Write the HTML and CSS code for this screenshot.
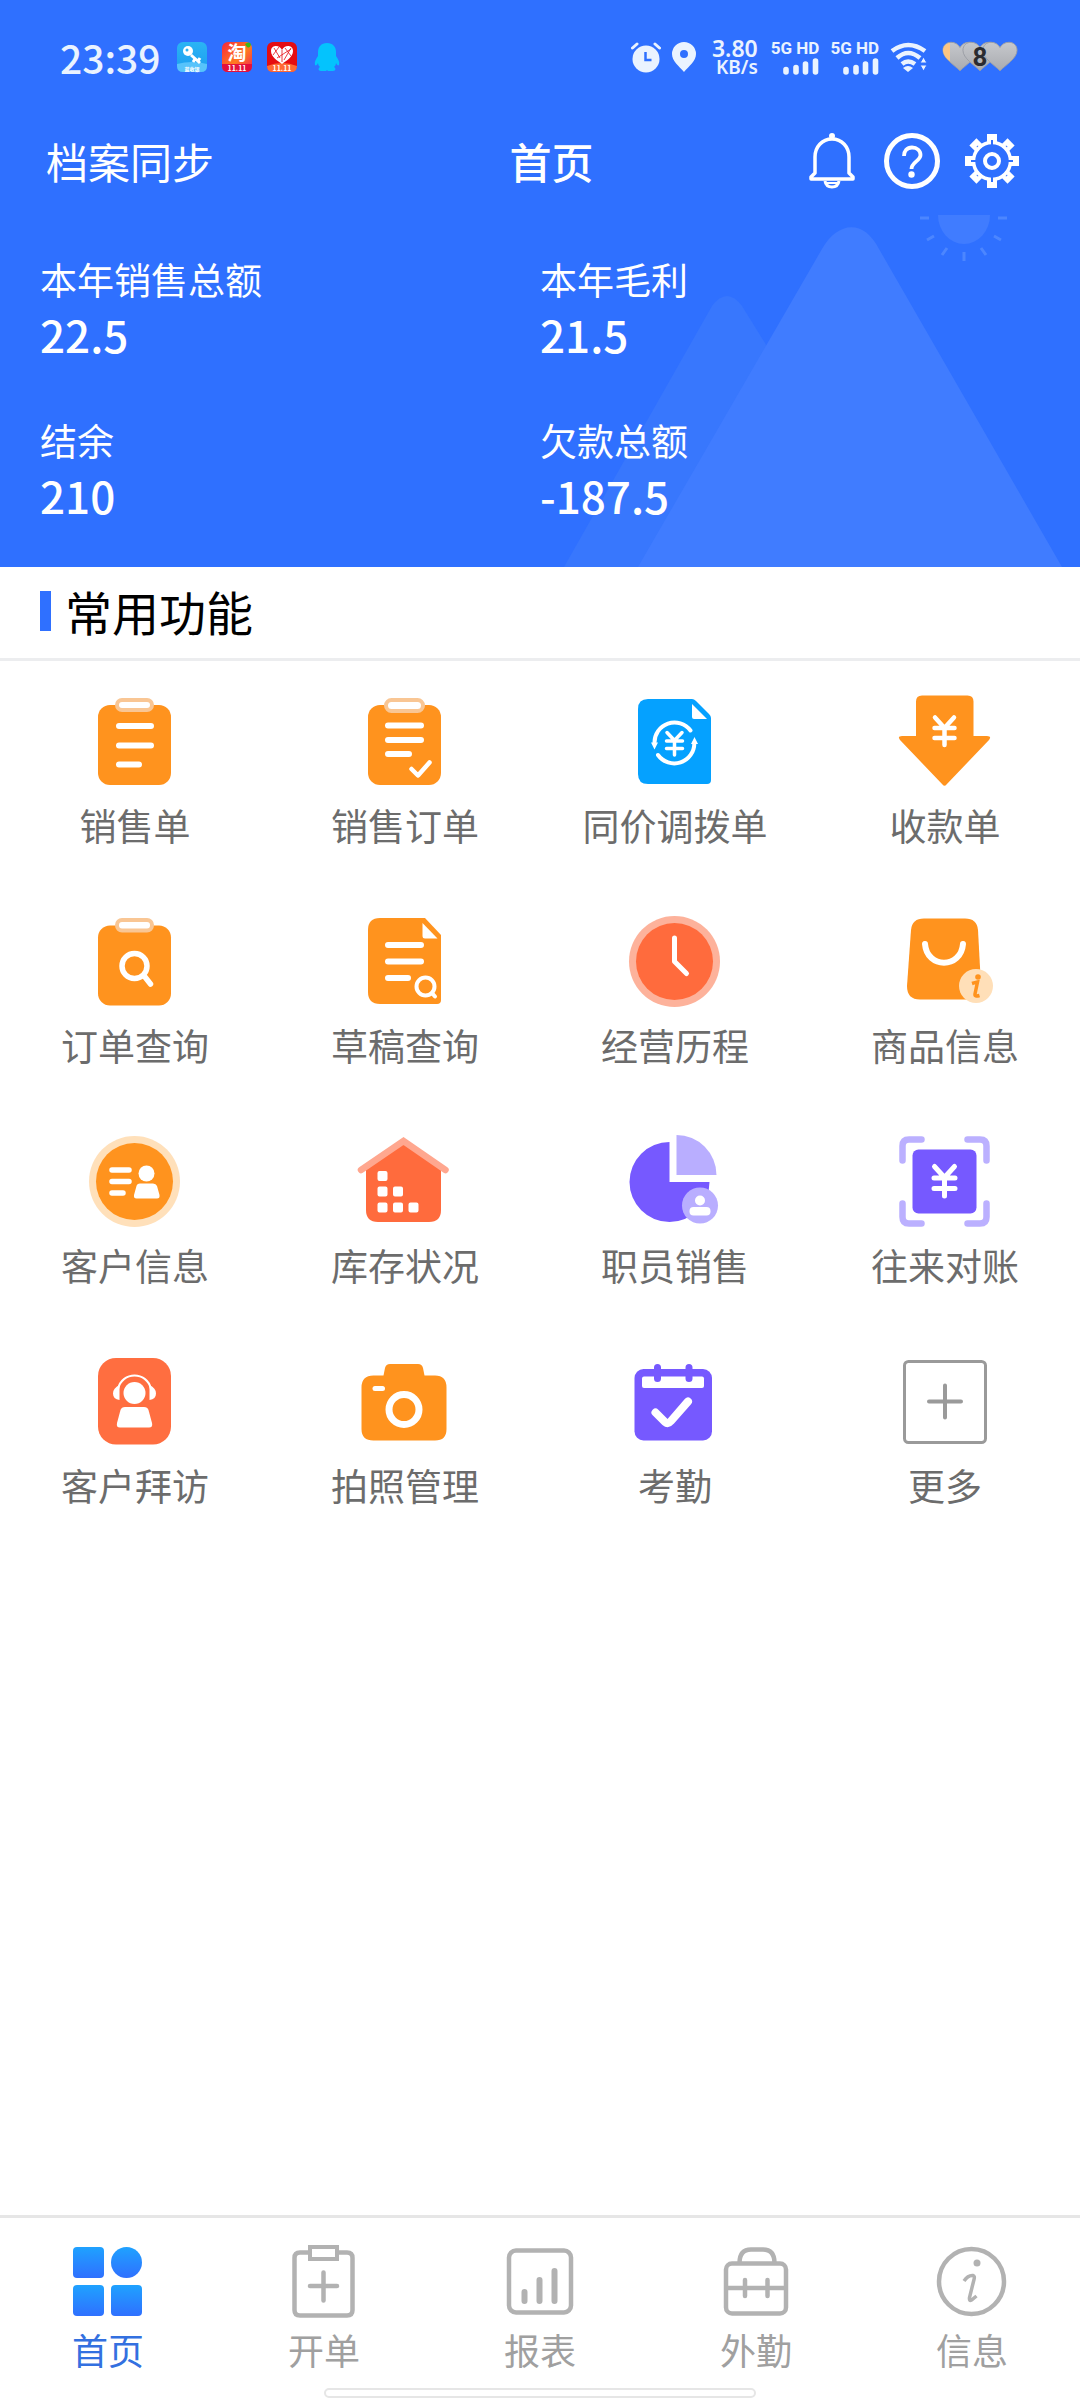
FILE: index.html
```html
<!DOCTYPE html>
<html lang="zh-CN">
<head>
<meta charset="utf-8">
<meta name="viewport" content="width=device-width, initial-scale=1">
<title>首页</title>
<link rel="stylesheet" href="styles.css">
</head>
<body>
<svg class="defs" aria-hidden="true">
  <defs>
    <linearGradient id="tabBlue" x1="0" y1="0" x2="0" y2="1"><stop offset="0" stop-color="#1fa2ff"/><stop offset="1" stop-color="#2f70ff"/></linearGradient>
    <linearGradient id="keyBlue" x1="0" y1="0" x2="0" y2="1"><stop offset="0" stop-color="#2bb4f4"/><stop offset="1" stop-color="#1b9df0"/></linearGradient>
    <linearGradient id="taoRed" x1="0" y1="0" x2="1" y2="1"><stop offset="0" stop-color="#f5263c"/><stop offset=".55" stop-color="#ff7a1f"/><stop offset="1" stop-color="#f01f5a"/></linearGradient>
    <linearGradient id="heartGrey" x1="0" y1="0" x2="0" y2="1"><stop offset="0" stop-color="#c6c8cc"/><stop offset="1" stop-color="#a9abb0"/></linearGradient>
    <symbol id="signal" viewBox="0 0 36 17"><path d="M3 11.500v2.500M13 9.500v4.500M22.500 6v8M32.500 3v11" stroke="#eaf3ff" stroke-width="5.600" stroke-linecap="round"/></symbol>
    <symbol id="heart" viewBox="0 0 38 32"><path d="M19 31C13 25 1 18 1 9.500 1 4 5 1 9.500 1 13.500 1 17 3 19 6.500 21 3 24.500 1 28.500 1 33 1 37 4 37 9.500 37 18 25 25 19 31Z"/></symbol>
    <g id="tooth"><path d="M25 3h10v10H25Z" fill="#fff"/><path d="M30 9v5" stroke="#2f70ff" stroke-width="2"/></g>
  </defs>
</svg>

<div class="app">
  <header class="hero">
    <svg class="hero-art" viewBox="0 0 516 352" aria-hidden="true">
      <path d="M0 352 148 91Q163 71 178 91L201 128 327 352Z" fill="#3877fd"/>
      <path d="M74 352 258 34C274 6 300 4 315 34L498 352Z" fill="#407cff"/>
      <path d="M374 0h52a26 29 0 0 1-52 0Z" fill="#407cff"/>
      <path d="M356 3h9M434 3h9M400 37v9M363 25l7-4M378 40l5-7M437 25l-7-4M422 40l-5-7" stroke="#4c86ff" stroke-width="3" fill="none"/>
    </svg>

    <div class="status">
      <time class="clock">23:39</time>
      <div class="notices">
        <svg width="30" height="30" viewBox="0 0 30 30" aria-hidden="true">
          <rect width="30" height="30" rx="6" fill="url(#keyBlue)"/>
          <path d="M0 22Q15 18 30 22V24Q30 30 24 30H6Q0 30 0 24Z" fill="#57c3fb"/>
          <path d="M14 13l9 8M18 17l-2 3M21 19l2-3" stroke="#fff" stroke-width="3"/>
          <circle cx="11" cy="9" r="5" fill="#fff"/><circle cx="10" cy="8" r="1.500" fill="#2bb4f4"/>
          <text x="15" y="29" font-size="5" font-weight="700" fill="#fff" text-anchor="middle">蓝收银</text>
        </svg>
        <svg width="30" height="30" viewBox="0 0 30 30" aria-hidden="true">
          <rect width="30" height="30" rx="6" fill="url(#taoRed)"/>
          <path d="M0 22h30v2q0 6-6 6H6q-6 0-6-6Z" fill="#e3103c"/>
          <path d="M23 2q4-3 6 0-1 5-4 3Z" fill="#3fb618"/>
          <text x="15" y="18" font-size="19" font-weight="700" fill="#fff" text-anchor="middle">淘</text>
          <text x="15" y="29" font-size="7" font-weight="700" fill="#fff" text-anchor="middle">11.11</text>
        </svg>
        <svg width="30" height="30" viewBox="0 0 30 30" aria-hidden="true">
          <rect width="30" height="30" rx="6" fill="#e50d12"/>
          <path d="M0 24Q15 18 30 24 30 30 24 30H6Q0 30 0 24Z" fill="#ff6a35"/>
          <path d="M15 22C11 19 4 15 4 9 4 5 7 4 9 4q4 0 6 4 2-4 6-4c2 0 5 1 5 5 0 6-7 10-11 13Z" fill="#fff"/>
          <path d="M7 6l6 10M12 5L6 13M24 6l-7 12M18 6l6 8M10 16l14-9M15 8v12" stroke="#e50d12" stroke-width=".8"/>
          <text x="15" y="29" font-size="7" font-weight="700" fill="#fff" text-anchor="middle">11.11</text>
        </svg>
        <svg width="30" height="30" viewBox="0 0 30 30" aria-hidden="true">
          <path d="M15 1c6 0 9 4 9 9v4c2 3 4 6 3 9-1 1-2 0-3-2 0 2-1 3-2 4 2 1 2 4-1 4h-5l-1-1-1 1H9c-3 0-3-3-1-4-1-1-2-2-2-4-1 2-2 3-3 2-1-3 1-6 3-9v-4c0-5 3-9 9-9Z" fill="#04c3fd"/>
        </svg>
      </div>
      <div class="system">
        <svg width="30" height="32" viewBox="0 0 30 32" aria-hidden="true">
          <circle cx="15" cy="18" r="13.500" fill="#eaf3ff"/>
          <path d="M1.500 7 6 3M28.500 7 24 3" stroke="#eaf3ff" stroke-width="3" stroke-linecap="round"/>
          <path d="M14.500 11v8h6" fill="none" stroke="#2f70ff" stroke-width="2.500"/>
        </svg>
        <svg width="24" height="30" viewBox="0 0 24 30" aria-hidden="true"><path fill-rule="evenodd" d="M12 0a12 12 0 0 1 12 12c0 7-7 12-12 18C7 24 0 19 0 12A12 12 0 0 1 12 0Zm0 8a4 4 0 1 0 0 8 4 4 0 0 0 0-8Z" fill="#eaf3ff"/></svg>
        <div class="speed"><span class="rate">3.80</span><span class="unit">KB/s</span></div>
        <div class="sim"><span>5G HD</span><svg width="36" height="17"><use href="#signal"/></svg></div>
        <div class="sim"><span>5G HD</span><svg width="36" height="17"><use href="#signal"/></svg></div>
        <svg width="38" height="30" viewBox="0 0 38 30" aria-hidden="true">
          <path d="M2 9Q18-3 35 9M7 16Q18 6 30 16M12 22Q18 17 25 22" fill="none" stroke="#eaf3ff" stroke-width="4.500"/>
          <path d="M13 26q5-4 10 0l-5 4Z" fill="#eaf3ff"/>
          <path d="M30 21l3.500-6 3.500 6ZM30 23h7l-3.500 6Z" fill="#eaf3ff" stroke="#2f70ff" stroke-width="1"/>
        </svg>
        <div class="battery">
          <svg width="76" height="32" viewBox="0 0 76 32" aria-hidden="true">
            <g fill="url(#heartGrey)" stroke="#9b9ea5" stroke-width="1">
              <use href="#heart" width="36" height="31"/>
              <use href="#heart" x="20" width="36" height="31"/>
              <use href="#heart" x="40" width="36" height="31"/>
            </g>
            <path d="M8 2C3 3 1 6 1 10q1 6 7 10Z" fill="#fdc583"/>
          </svg>
          <span class="level">8</span>
        </div>
      </div>
    </div>

    <div class="toolbar">
      <button class="sync" type="button">档案同步</button>
      <h1 class="title">首页</h1>
      <div class="actions">
        <button type="button" aria-label="通知">
          <svg width="60" height="60" viewBox="0 0 60 60" fill="none" stroke="#fff" stroke-width="3.500">
            <path d="M13 42V26C13 16 20 8 30 8s17 8 17 18v16l4 4v2H9v-2Z" stroke-linejoin="round"/>
            <path d="M23 50q1 6 7 6t7-6" stroke-width="3"/><path d="M25 52h10" stroke-width="2"/><circle cx="30" cy="5" r="2" fill="#fff" stroke-width="2"/>
          </svg>
        </button>
        <button type="button" aria-label="帮助">
          <svg width="60" height="60" viewBox="0 0 60 60" fill="none" stroke="#fff">
            <circle cx="30" cy="30" r="25.500" stroke-width="5"/>
            <path d="M22 25c0-5 3-8.500 8-8.500s8.500 3 8.500 7.500c0 6-9 7-9 14" stroke-width="3.800"/>
            <circle cx="29.500" cy="43.500" r="3.200" fill="#fff" stroke="none"/>
          </svg>
        </button>
        <button type="button" aria-label="设置">
          <svg width="60" height="60" viewBox="0 0 60 60" fill="none">
            <use href="#tooth"/>
            <use href="#tooth" transform="rotate(45 30 30)"/>
            <use href="#tooth" transform="rotate(90 30 30)"/>
            <use href="#tooth" transform="rotate(135 30 30)"/>
            <use href="#tooth" transform="rotate(180 30 30)"/>
            <use href="#tooth" transform="rotate(225 30 30)"/>
            <use href="#tooth" transform="rotate(270 30 30)"/>
            <use href="#tooth" transform="rotate(315 30 30)"/>
            <circle cx="30" cy="30" r="18.500" stroke="#fff" stroke-width="3.500"/>
            <path d="M30 9v5M30 46v5M9 30h5M46 30h5" stroke="#2f70ff" stroke-width="2"/>
            <circle cx="30" cy="30" r="7" stroke="#fff" stroke-width="4"/>
          </svg>
        </button>
      </div>
    </div>

    <dl class="stats">
      <div><dt>本年销售总额</dt><dd>22.5</dd></div>
      <div><dt>本年毛利</dt><dd>21.5</dd></div>
      <div><dt>结余</dt><dd>210</dd></div>
      <div><dt>欠款总额</dt><dd>-187.5</dd></div>
    </dl>
  </header>

  <main class="content">
    <h2 class="section-title"><span>常用功能</span></h2>
    <div class="grid">
      <a class="tile" href="#">
        <svg viewBox="0 0 100 100" aria-hidden="true">
          <rect x="13" y="13" width="73" height="80" rx="12" fill="#ff931e"/>
          <rect x="32" y="8" width="35" height="10" rx="5" fill="#fff" stroke="#f9c694" stroke-width="4"/>
          <path d="M34 34h32M34 53.500h32M34 72.500h20" stroke="#fff" stroke-width="6" stroke-linecap="round"/>
        </svg><span>销售单</span></a>
      <a class="tile" href="#">
        <svg viewBox="0 0 100 100" aria-hidden="true">
          <rect x="13" y="13" width="73" height="80" rx="12" fill="#ff931e"/>
          <rect x="31" y="8" width="37" height="11" rx="5.500" fill="#fff" stroke="#f9c694" stroke-width="4"/>
          <path d="M33 33.500h33M33 48h33M33 62h21" stroke="#fff" stroke-width="6" stroke-linecap="round"/>
          <path d="M56.500 77l6.500 6.500L74.500 70.500" fill="none" stroke="#fff" stroke-width="4.500" stroke-linecap="round" stroke-linejoin="round"/>
        </svg><span>销售订单</span></a>
      <a class="tile" href="#">
        <svg viewBox="0 0 100 100" aria-hidden="true">
          <path d="M23 7H67Q69 7 71 9L84 22Q86 24 86 26V88Q86 92 82 92H23Q13 92 13 82V17Q13 7 23 7Z" fill="#05a1ff"/>
          <path d="M67 12 82 27H69Q67 27 67 25Z" fill="#fff"/>
          <path d="M65.500 38.500A20 20 0 0 0 29.500 51M33 63A20 20 0 0 0 69.300 51" fill="none" stroke="#fff" stroke-width="4" stroke-linecap="round"/>
          <path d="M26 50.500h7l-3.500 7ZM66 52h7l-3.500-7Z" fill="#fff"/>
          <path d="M42 40.500l7.500 8 7.500-8M41.500 49h16M41.500 56.500h16M49.500 48v15" fill="none" stroke="#fff" stroke-width="3.500" stroke-linecap="round"/>
        </svg><span>同价调拨单</span></a>
      <a class="tile" href="#">
        <svg viewBox="0 0 100 100" aria-hidden="true">
          <path d="M27 3.500H72.500Q78.500 3.500 78.500 9.500V44H92Q97 44 94 48L51.500 92.500Q49.500 95 47.500 92.500L5 48Q2 44 7 44H21V9.500Q21 3.500 27 3.500Z" fill="#ff931e"/>
          <path d="M40 25.500l9.500 10.500 9.500-10.500M39.500 36h20M39.500 46h20M49.500 36v17" fill="none" stroke="#fff" stroke-width="4.500" stroke-linecap="round"/>
        </svg><span>收款单</span></a>

      <a class="tile" href="#">
        <svg viewBox="0 0 100 100" aria-hidden="true">
          <rect x="13" y="13.500" width="73" height="80" rx="12" fill="#ff931e"/>
          <rect x="32" y="8" width="35" height="10.500" rx="5" fill="#fff" stroke="#f9c694" stroke-width="4"/>
          <circle cx="49.500" cy="54" r="12.500" fill="none" stroke="#fff" stroke-width="5.500"/>
          <path d="M60 65l5.500 7" stroke="#fff" stroke-width="5.500" stroke-linecap="round"/>
        </svg><span>订单查询</span></a>
      <a class="tile" href="#">
        <svg viewBox="0 0 100 100" aria-hidden="true">
          <path d="M25 6H70L86 23V88Q86 92 82 92H25Q13 92 13 80V18Q13 6 25 6Z" fill="#ff931e"/>
          <path d="M67.500 11 82.500 26.500H70Q67.500 26.500 67.500 24Z" fill="#fff"/>
          <path d="M33 33h33M33 49.500h33M33 66h20" stroke="#fff" stroke-width="6" stroke-linecap="round"/>
          <circle cx="70.500" cy="74.500" r="9" fill="none" stroke="#fff" stroke-width="4"/>
          <path d="M77 81l3 3.500" stroke="#fff" stroke-width="4" stroke-linecap="round"/>
        </svg><span>草稿查询</span></a>
      <a class="tile" href="#">
        <svg viewBox="0 0 100 100" aria-hidden="true">
          <circle cx="49.500" cy="49.500" r="45.500" fill="#fdb29b"/><circle cx="49.500" cy="49.500" r="38.500" fill="#ff6b3d"/>
          <path d="M49.500 26V49.500L61.500 61.500" fill="none" stroke="#fff" stroke-width="5" stroke-linecap="round" stroke-linejoin="round"/>
        </svg><span>经营历程</span></a>
      <a class="tile" href="#">
        <svg viewBox="0 0 100 100" aria-hidden="true">
          <path d="M29 6.500H70Q82 6.500 83 18L86 74Q86 87.500 74 87.500H25Q12 87.500 12 74L16 18Q17 6.500 29 6.500Z" fill="#ff931e"/>
          <path d="M30 32C32 57 66 57 68 32" fill="none" stroke="#fff" stroke-width="6" stroke-linecap="round"/>
          <circle cx="81" cy="74" r="17" fill="#ffdfb8"/>
          <path d="M77 71.500q3-1 5.500-1.500l-2.500 12q-.5 3 4.500 1.500" fill="none" stroke="#ff931e" stroke-width="3.500"/><circle cx="83" cy="65" r="2.800" fill="#ff931e"/>
        </svg><span>商品信息</span></a>

      <a class="tile" href="#">
        <svg viewBox="0 0 100 100" aria-hidden="true">
          <circle cx="49.500" cy="49.500" r="45.500" fill="#ffe0ba"/><circle cx="49.500" cy="49.500" r="38.500" fill="#ff931e"/>
          <path d="M27 38h17M27 49.500h17M27 61h11" stroke="#fff" stroke-width="5.500" stroke-linecap="round"/>
          <circle cx="61.500" cy="41.500" r="8" fill="#fff"/>
          <path d="M55 51.500H68Q71 51.500 72 54L74.500 63Q75 66.500 72 66.500H51.500Q48.500 66.500 49 63L51.500 54Q52 51.500 55 51.500Z" fill="#fff"/>
        </svg><span>客户信息</span></a>
      <a class="tile" href="#">
        <svg viewBox="0 0 100 100" aria-hidden="true">
          <path d="M11 36 48.500 10 86 36V78Q86 90 74 90H23Q11 90 11 78Z" fill="#ff6b3d"/>
          <path d="M6 38 48.500 9 90.500 38" fill="none" stroke="#ffa78f" stroke-width="6.500" stroke-linecap="round"/>
          <path d="M24.500 41h6v6h-6ZM24.500 56.500h6v6h-6ZM40 56.500h6v6h-6ZM24.500 72.500h6v6h-6ZM40 72.500h6v6h-6ZM55.500 72.500h6v6h-6Z" fill="#fff" stroke="#fff" stroke-width="4" stroke-linejoin="round"/>
        </svg><span>库存状况</span></a>
      <a class="tile" href="#">
        <svg viewBox="0 0 100 100" aria-hidden="true">
          <path d="M44.500 50V10A40 40 0 1 0 84.500 50Z" fill="#7659ff"/>
          <path d="M51.500 3A40 40 0 0 1 91.500 43H51.500Z" fill="#b9aeff"/>
          <circle cx="75" cy="73.500" r="18" fill="#b9aeff"/><circle cx="75" cy="68.500" r="5" fill="#fff"/><rect x="64.500" y="75" width="21" height="8.500" rx="4" fill="#fff"/>
        </svg><span>职员销售</span></a>
      <a class="tile" href="#">
        <svg viewBox="0 0 100 100" aria-hidden="true">
          <rect x="17.500" y="17.500" width="64" height="64" rx="6" fill="#7659ff"/>
          <path d="M26.500 7.500H14Q7.500 7.500 7.500 14V28.500M72.500 7.500H85Q91.500 7.500 91.500 14V28.500M26.500 91.500H14Q7.500 91.500 7.500 85V71.500M72.500 91.500H85Q91.500 91.500 91.500 85V71.500" fill="none" stroke="#bbb0ff" stroke-width="6.500" stroke-linecap="round"/>
          <path d="M39.500 34.500l10 11 10-11M39 46h21M39 56.500h21M49.500 46v18" fill="none" stroke="#fff" stroke-width="5" stroke-linecap="round"/>
        </svg><span>往来对账</span></a>

      <a class="tile" href="#">
        <svg viewBox="0 0 100 100" aria-hidden="true">
          <rect x="13" y="6" width="73" height="86.500" rx="18" fill="#ff6e40"/>
          <circle cx="49.500" cy="41" r="11" fill="#fff"/>
          <path d="M33 37C37 19 62 19 66 37" fill="none" stroke="#fff" stroke-width="2"/>
          <path d="M34.500 33V48Q28 47 28 41.500T34.500 33ZM64.500 33V48Q71 47 71 41.500T64.500 33Z" fill="#fff"/>
          <path d="M40 55H59Q62.500 55 63.500 58L67 71Q68 75.500 64 75.500H35Q31 75.500 32 71L35.500 58Q36.500 55 40 55Z" fill="#fff"/>
        </svg><span>客户拜访</span></a>
      <a class="tile" href="#">
        <svg viewBox="0 0 100 100" aria-hidden="true">
          <path d="M18.500 23.500H28.500L30 16Q31 12 35 12H63Q67 12 68 16L69.500 23.500H80Q91.500 23.500 91.500 35.500V77Q91.500 88.500 80 88.500H18.500Q6.500 88.500 6.500 77V35.500Q6.500 23.500 18.500 23.500Z" fill="#ff931e"/>
          <path d="M20 36.500h7.500" stroke="#fff" stroke-width="5" stroke-linecap="round"/>
          <circle cx="49" cy="57.500" r="15" fill="none" stroke="#fff" stroke-width="7"/>
        </svg><span>拍照管理</span></a>
      <a class="tile" href="#">
        <svg viewBox="0 0 100 100" aria-hidden="true">
          <rect x="9.500" y="17" width="77.500" height="71.500" rx="9" fill="#7659ff"/>
          <rect x="17" y="24.500" width="62" height="11.500" rx="2" fill="#fff"/>
          <path d="M32.500 15.500V26.500M64 15.500V26.500" stroke="#7659ff" stroke-width="7" stroke-linecap="round"/>
          <path d="M30.500 60.500L40 70Q43 72.500 46 69L63 49.500" fill="none" stroke="#fff" stroke-width="8" stroke-linecap="round" stroke-linejoin="round"/>
        </svg><span>考勤</span></a>
      <a class="tile" href="#">
        <svg viewBox="0 0 100 100" fill="none" stroke="#9a9a9a" aria-hidden="true">
          <rect x="9.500" y="9.500" width="81" height="81" rx="4" stroke-width="3"/>
          <path d="M34 49.500h32M50 33.500v32" stroke-width="4" stroke-linecap="round"/>
        </svg><span>更多</span></a>
    </div>
  </main>

  <footer class="dock">
    <nav class="tabs">
      <a class="tab active" href="#" aria-current="page">
        <svg viewBox="0 0 80 80" fill="url(#tabBlue)" aria-hidden="true"><rect x="5" y="6" width="31" height="31" rx="4"/><circle cx="58.500" cy="21.500" r="15.500"/><rect x="5" y="44" width="31" height="31" rx="4"/><rect x="43" y="44" width="31" height="31" rx="4"/></svg>
        <span>首页</span></a>
      <a class="tab" href="#">
        <svg viewBox="0 0 80 80" fill="none" stroke="#b2b2b2" stroke-width="4.500" aria-hidden="true"><path d="M24.500 11.500H16Q10.500 11.500 10.500 17V69Q10.500 74.500 16 74.500H63Q68.500 74.500 68.500 69V17Q68.500 11.500 63 11.500H54.500"/><rect x="26" y="6" width="27" height="12" stroke-width="4"/><path d="M26 45h27M39.500 31.500v28" stroke-linecap="round"/></svg>
        <span>开单</span></a>
      <a class="tab" href="#">
        <svg viewBox="0 0 80 80" fill="none" stroke="#b2b2b2" stroke-width="4.500" aria-hidden="true"><rect x="9" y="9.500" width="62" height="62" rx="7"/><path d="M24.500 51v9M39.500 39v21M54.500 30v30" stroke-width="6" stroke-linecap="round"/></svg>
        <span>报表</span></a>
      <a class="tab" href="#">
        <svg viewBox="0 0 80 80" fill="none" stroke="#b2b2b2" stroke-width="4.500" aria-hidden="true"><rect x="10" y="22.500" width="60" height="50" rx="6"/><path d="M23.500 22Q23.500 8.500 35 8.500H47Q58.500 8.500 58.500 22M10 47h60"/><path d="M29 39v16M51.500 39v16" stroke-linecap="round"/></svg>
        <span>外勤</span></a>
      <a class="tab" href="#">
        <svg viewBox="0 0 80 80" fill="none" stroke="#b2b2b2" stroke-width="4.500" aria-hidden="true"><circle cx="39.500" cy="40.500" r="32.500"/><circle cx="45" cy="22" r="3.500" fill="#b2b2b2" stroke="none"/><path d="M32 40q4-6 9-5.500 2 .5 1 4l-4.500 18q-.5 4 2 2.500l5-4" stroke-width="3.500"/></svg>
        <span>信息</span></a>
    </nav>
    <div class="home-indicator"></div>
  </footer>
</div>
</body>
</html>
```

FILE: styles.css
```css
* {
  box-sizing: border-box;
}

body {
  margin: 0;
  background: #fff;
  font-family: "Noto Sans CJK SC", "Noto Sans", sans-serif;
}

.defs {
  position: absolute;
  width: 0;
  height: 0;
}

button {
  padding: 0;
  border: 0;
  background: none;
  color: inherit;
  font: inherit;
}

a {
  color: inherit;
  text-decoration: none;
}

svg {
  display: block;
}

.app {
  display: flex;
  flex-direction: column;
  min-height: 100vh;
}

/* Blue header */
.hero {
  position: relative;
  padding-bottom: 47px;
  background: #2f70ff;
  color: #fff;
}

.hero-art {
  position: absolute;
  right: 0;
  bottom: 0;
  width: 516px;
}

.status,
.toolbar,
.stats {
  position: relative;
}

.status {
  display: flex;
  align-items: center;
  height: 114px;
  padding: 0 62px 0 60px;
  color: #eaf3ff;
}

.clock {
  font-size: 39px;
  font-weight: 500;
  line-height: 48px;
}

.notices {
  display: flex;
  gap: 15px;
  margin-left: 16px;
}

.notices svg {
  overflow: visible;
}

.system {
  display: flex;
  align-items: center;
  gap: 11px;
  margin-left: auto;
}

.speed {
  display: flex;
  flex-direction: column;
  align-items: flex-end;
  margin: 0 2px 0 5px;
  font-family: "Noto Sans", sans-serif;
  font-weight: 600;
}

.rate {
  font-size: 23px;
  line-height: 20px;
}

.unit {
  font-size: 19px;
  line-height: 18px;
}

.sim {
  display: flex;
  flex-direction: column;
  align-items: flex-end;
  gap: 2px;
  font-family: Roboto, sans-serif;
  font-size: 17px;
  font-weight: 700;
  line-height: 16px;
}

.battery {
  display: grid;
  place-items: center;
  margin-left: 3px;
}

.battery > * {
  grid-area: 1 / 1;
}

.level {
  color: #2a2b30;
  font-family: Roboto, sans-serif;
  font-size: 26px;
  font-weight: 700;
  line-height: 32px;
}

.toolbar {
  display: grid;
  grid-template-columns: 47% 1fr auto;
  align-items: center;
  height: 94px;
  padding: 0 48px 0 46px;
}

.sync,
.title {
  justify-self: start;
  margin: 0;
  font-size: 42px;
  line-height: 60px;
}

.title {
  font-weight: 500;
}

.actions {
  display: flex;
  gap: 20px;
  padding-right: 10px;
}

.stats {
  display: grid;
  grid-template-columns: 1fr 1fr;
  gap: 59px 0;
  margin: 0;
  padding: 49px 40px 0;
}

.stats dt {
  font-size: 37px;
  line-height: 44px;
}

.stats dd {
  margin: 8px 0 0;
  font-size: 44px;
  font-weight: 500;
  line-height: 50px;
}

/* Shortcuts */
.content {
  flex: 1;
}

.section-title {
  display: flex;
  align-items: center;
  gap: 14px;
  height: 94px;
  margin: 0;
  padding: 0 40px 4px;
  border-bottom: 3px solid #ecedef;
  color: #000;
  font-size: 47px;
  font-weight: 400;
}

.section-title::before {
  width: 11px;
  height: 40px;
  background: #2f70ff;
  content: "";
}

.grid {
  display: grid;
  grid-template-columns: repeat(4, 1fr);
  gap: 65px 0;
  padding: 31px 0;
}

.tile,
.tab {
  display: flex;
  flex-direction: column;
  align-items: center;
  line-height: 44px;
}

.tile {
  gap: 11px;
  color: #6c6c6c;
  font-size: 37px;
}

.tile svg {
  width: 100px;
  height: 100px;
}

/* Bottom navigation */
.dock {
  border-top: 3px solid #e6e6e6;
  padding-bottom: 2px;
}

.tabs {
  display: grid;
  grid-template-columns: repeat(5, 1fr);
  padding-top: 23px;
}

.tab {
  gap: 6px;
  color: #a0a0a0;
  font-size: 36px;
}

.tab.active {
  color: #3370e0;
}

.tab svg {
  width: 80px;
  height: 80px;
}

.home-indicator {
  width: 40%;
  height: 10px;
  margin: 17px auto 0;
  border: 2px solid #e6e6e6;
  border-radius: 5px;
}
```
